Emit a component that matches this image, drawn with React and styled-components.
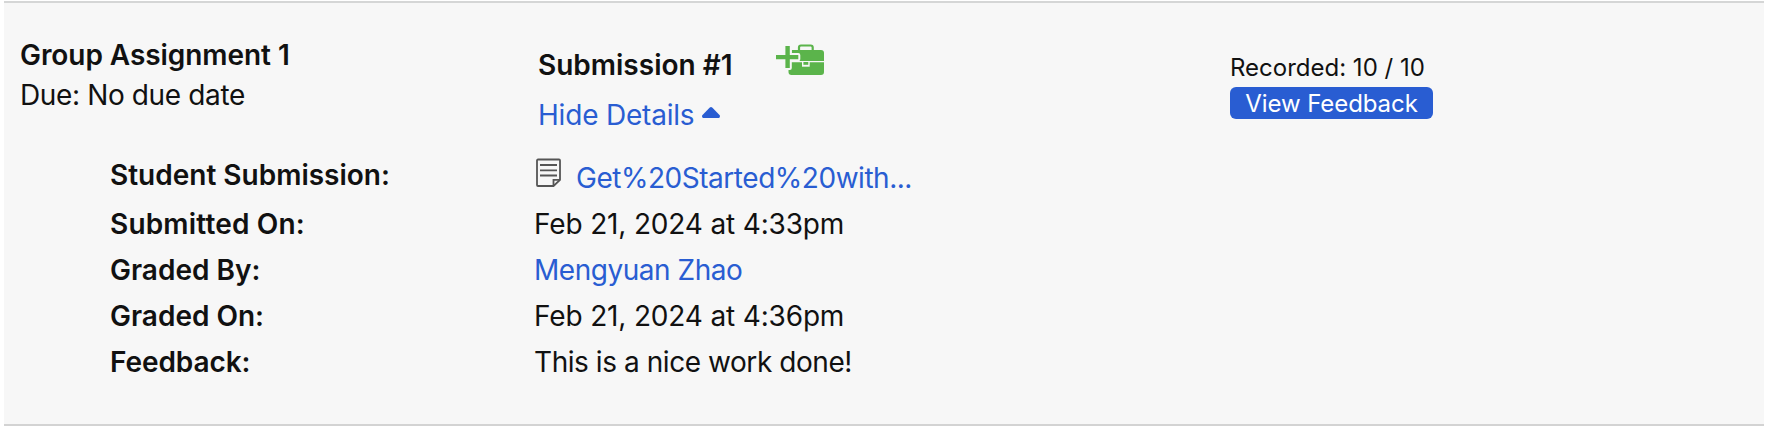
import React, { useState } from 'react';
import styled, { createGlobalStyle } from 'styled-components';

const GlobalStyle = createGlobalStyle`
  * {
    box-sizing: border-box;
  }

  body {
    margin: 0;
    background: #fff;
    color: #111;
    font-family: Inter, "Liberation Sans", sans-serif;
    font-size: 28px;
  }
`;

const Panel = styled.section`
  width: 1760px;
  height: 425px;
  margin: 1px 0 0 4px;
  padding-top: 32px;
  background: #f7f7f7;
  border-top: 2px solid #d5d6d6;
  border-bottom: 2px solid #d3d3d3;
`;

const Header = styled.div`
  display: grid;
  grid-template-columns: 518px 692px 1fr;
  height: 115px;
  padding-left: 16px;
`;

const Text = styled.div`
  width: max-content;
  line-height: ${({ $line }) => $line || 46}px;
  font-weight: ${({ $bold }) => ($bold ? 600 : 400)};
  letter-spacing: ${({ $track }) => $track || 0}px;
  white-space: nowrap;
`;

const Link = styled.a`
  color: #295dd2;
  text-decoration: none;
  cursor: pointer;
`;

const TitleRow = styled.div`
  display: flex;
  align-items: flex-start;
  height: 50px;
  padding-top: 7px;
`;

const ToolboxIcon = styled.svg`
  width: 48px;
  height: 32px;
  margin: 2px 0 0 43px;
`;

const Toggle = styled(Link)`
  display: flex;
  align-items: flex-start;
`;

const Caret = styled.svg`
  width: 18px;
  height: 11px;
  margin: 22px 0 0 8px;
`;

const Grade = styled.div`
  padding-top: 14px;
  font-size: 24px;
`;

const FeedbackButton = styled.button`
  display: flex;
  justify-content: center;
  width: 203px;
  height: 32px;
  padding: 0;
  border: 0;
  border-radius: 6px;
  background: #295dd2;
  color: #fff;
  font: inherit;
`;

const Details = styled.dl`
  display: grid;
  grid-template-columns: 424px 1fr;
  grid-template-rows: 51px repeat(4, 46px);
  margin: 0;
  padding-left: 106px;
`;

const Label = styled.dt`
  padding-top: ${({ $top }) => $top || 0}px;
`;

const Value = styled.dd`
  display: flex;
  align-items: flex-start;
  margin: 0;
  padding-top: ${({ $top }) => $top || 0}px;
`;

const FileIcon = styled.svg`
  width: 26px;
  height: 30px;
  margin: 3px 14px 0 2px;
`;

const rows = [
  { label: 'Submitted On:', labelTrack: 0.17, value: 'Feb 21, 2024 at 4:33pm', track: -0.16 },
  { label: 'Graded By:', value: 'Mengyuan Zhao', track: -0.47, link: true },
  { label: 'Graded On:', value: 'Feb 21, 2024 at 4:36pm', track: -0.16 },
  { label: 'Feedback:', labelTrack: -0.08, value: 'This is a nice work done!', track: -0.44 },
];

function Toolbox() {
  return (
    <ToolboxIcon viewBox="0 0 48 32" fill="#5bb44b">
      <path d="M23 7V3.500a2 2 0 0 1 2-2h9.700a2 2 0 0 1 2 2V7" fill="none" stroke="#5bb44b" strokeWidth="2.200" />
      <path d="M15.700 6H45a3 3 0 0 1 3 3v8H15.700z" />
      <path d="M12.500 18.300H48V28a3 3 0 0 1-3 3H15.500a3 3 0 0 1-3-3z" />
      <path d="M26 17h7.700v5.700H26z" fill="#f7f7f7" />
      <path d="M27.400 18h4.900v2.800h-4.900z" />
      {/* the plus keeps a gap between itself and the case */}
      <path
        d="M9.400 2h4.400v9h8.500v4.200h-8.500V24H9.400v-8.800H0V11h9.400z"
        stroke="#f7f7f7"
        strokeWidth="4"
        strokeLinejoin="round"
        paintOrder="stroke"
      />
    </ToolboxIcon>
  );
}

function FilePage() {
  return (
    <FileIcon viewBox="0 0 26 30" fill="none" stroke="#555" strokeWidth="1.8">
      <path d="M2 1.500h21a1 1 0 0 1 1 1v19.300L17.500 28H2a1 1 0 0 1-1-1V2.500a1 1 0 0 1 1-1z" />
      <path d="M17.500 28v-6.200H24M4 7h17M4 12.300h17M4 17.500h17" />
    </FileIcon>
  );
}

function App() {
  const [open, setOpen] = useState(true);

  return (
    <>
      <GlobalStyle />
      <Panel>
        <Header>
          <div>
            <Text $bold $line={40} $track={-0.06}>Group Assignment 1</Text>
            <Text $line={40} $track={-0.37}>Due: No due date</Text>
          </div>
          <div>
            <TitleRow>
              <Text $bold>Submission #1</Text>
              <Toolbox />
            </TitleRow>
            <Toggle onClick={() => setOpen(!open)}>
              <Text $line={60} $track={-0.2}>{open ? 'Hide Details' : 'Show Details'}</Text>
              <Caret viewBox="0 0 18 11" fill="#295dd2">
                <path d="M7.800.6a1.700 1.700 0 0 1 2.400 0l7.300 7.400c1 1.100.3 3-1.200 3H1.700C.2 11-.5 9.100.5 8z" />
              </Caret>
            </Toggle>
          </div>
          <Grade>
            <Text $line={38}>Recorded: 10 / 10</Text>
            <FeedbackButton>
              <Text $line={33} $track={-0.08}>View Feedback</Text>
            </FeedbackButton>
          </Grade>
        </Header>

        {open && (
          <Details>
            <Label $top={2}><Text $bold>Student Submission:</Text></Label>
            <Value $top={5}>
              <FilePage />
              <Link><Text $track={-0.47}>Get%20Started%20with...</Text></Link>
            </Value>
            {rows.map(({ label, labelTrack, value, track, link }) => (
              <React.Fragment key={label}>
                <Label><Text $bold $track={labelTrack}>{label}</Text></Label>
                <Value>
                  {link ? (
                    <Link><Text $track={track}>{value}</Text></Link>
                  ) : (
                    <Text $track={track}>{value}</Text>
                  )}
                </Value>
              </React.Fragment>
            ))}
          </Details>
        )}
      </Panel>
    </>
  );
}

export default App;
